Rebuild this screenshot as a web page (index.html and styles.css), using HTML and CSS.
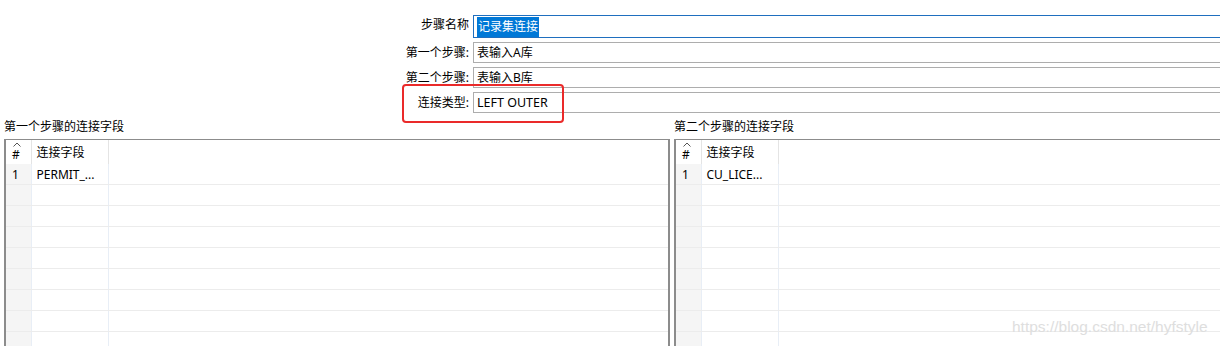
FILE: index.html
```html
<!DOCTYPE html>
<html lang="zh">
<head>
<meta charset="UTF-8">
<title>记录集连接</title>
<link rel="stylesheet" href="styles.css">
</head>
<body>

<div class="dialog">
  <div class="settings">
    <label class="field-label" for="step_name">步骤名称</label>
    <div class="field field-active" id="step_name"><span class="selected">记录集连接</span></div>

    <label class="field-label">第一个步骤:</label>
    <div class="field">表输入A库</div>

    <label class="field-label">第二个步骤:</label>
    <div class="field">表输入B库</div>

    <label class="field-label">连接类型:</label>
    <div class="field">LEFT OUTER</div>
  </div>

  <!-- annotation around the join type -->
  <div class="highlight-box"></div>

  <div class="panels">
    <div class="panel panel-left">
      <div class="panel-title">第一个步骤的连接字段</div>
      <div class="grid-box">
        <table class="grid">
          <colgroup><col class="c-num"><col class="c-name"><col></colgroup>
          <thead>
            <tr>
              <th class="num"><svg class="sort" width="8" height="5" viewBox="0 0 8 5"><path d="M0.5 4.5 L4 1 L7.5 4.5" fill="none" stroke="#555" stroke-width="1"/></svg>#</th>
              <th>连接字段</th><th></th>
            </tr>
          </thead>
          <tbody>
            <tr><td class="num">1</td><td>PERMIT_...</td><td></td></tr>
            <tr><td class="num"></td><td></td><td></td></tr>
            <tr><td class="num"></td><td></td><td></td></tr>
            <tr><td class="num"></td><td></td><td></td></tr>
            <tr><td class="num"></td><td></td><td></td></tr>
            <tr><td class="num"></td><td></td><td></td></tr>
            <tr><td class="num"></td><td></td><td></td></tr>
            <tr><td class="num"></td><td></td><td></td></tr>
            <tr><td class="num"></td><td></td><td></td></tr>
          </tbody>
        </table>
      </div>
    </div>

    <div class="panel panel-right">
      <div class="panel-title">第二个步骤的连接字段</div>
      <div class="grid-box">
        <table class="grid">
          <colgroup><col class="c-num"><col class="c-name"><col></colgroup>
          <thead>
            <tr>
              <th class="num"><svg class="sort" width="8" height="5" viewBox="0 0 8 5"><path d="M0.5 4.5 L4 1 L7.5 4.5" fill="none" stroke="#555" stroke-width="1"/></svg>#</th>
              <th>连接字段</th><th></th>
            </tr>
          </thead>
          <tbody>
            <tr><td class="num">1</td><td>CU_LICE...</td><td></td></tr>
            <tr><td class="num"></td><td></td><td></td></tr>
            <tr><td class="num"></td><td></td><td></td></tr>
            <tr><td class="num"></td><td></td><td></td></tr>
            <tr><td class="num"></td><td></td><td></td></tr>
            <tr><td class="num"></td><td></td><td></td></tr>
            <tr><td class="num"></td><td></td><td></td></tr>
            <tr><td class="num"></td><td></td><td></td></tr>
            <tr><td class="num"></td><td></td><td></td></tr>
          </tbody>
        </table>
      </div>
    </div>
  </div>

  <div class="watermark">https://blog.csdn.net/hyfstyle</div>
</div>

</body>
</html>
```

FILE: styles.css
```css
html, body {
  margin: 0;
  padding: 0;
  background-color: #fff;
  overflow: hidden;
}

body {
  font-family: "Noto Sans", "Noto Sans CJK SC", sans-serif;
  font-size: 12px;
  color: #000;
}

.dialog {
  position: relative;
  width: 1220px;
  height: 346px;
}

/* top form */
.settings {
  display: grid;
  grid-template-columns: 469px 760px;
  column-gap: 4px;
  row-gap: 4px;
  padding-top: 15px;
}

.field-label {
  text-align: right;
  line-height: 16px;
  align-self: center;
  white-space: nowrap;
}

.settings .field-label:first-child {
  align-self: start;
  padding-top: 2px;
}

.field {
  height: 19px;
  line-height: 19px;
  border: 1px solid #adadad;
  padding-left: 3px;
  white-space: nowrap;
}

.field:last-child {
  font-size: 12.5px;
}

.field-active {
  height: 21px;
  line-height: 21px;
  border-color: #1f6fbf;
}

.selected {
  background-color: #0078d7;
  color: #fff;
  padding: 1px 1px 2px;
}

.highlight-box {
  position: absolute;
  left: 402px;
  top: 84px;
  width: 158px;
  height: 35px;
  border: 2px solid #ea2a2a;
  border-radius: 4px;
}

/* field grids */
.panels {
  display: flex;
  gap: 4px;
  padding-left: 4px;
  margin-top: 6px;
}

.panel {
  flex-shrink: 0;
}

.panel-left {
  width: 666px;
}

.panel-right {
  width: 560px;
}

.panel-title {
  height: 20px;
  line-height: 16px;
  white-space: nowrap;
}

.grid-box {
  border: 1px solid #8c8c8c;
  border-left-width: 2px;
  border-right-width: 2px;
  height: 220px;
  overflow: hidden;
}

.panel-right .grid-box {
  border-right: none;
}

.grid {
  width: 100%;
  border-collapse: collapse;
  table-layout: fixed;
}

.c-num {
  width: 25px;
}

.c-name {
  width: 77px;
}

.grid th {
  height: 24px;
  padding: 0 0 0 5px;
  text-align: left;
  font-weight: normal;
  border-right: 1px solid #e4e4e4;
  position: relative;
}

.grid th.num {
  padding-left: 6px;
  padding-top: 6px;
  height: 18px;
  line-height: 16px;
}

.sort {
  position: absolute;
  left: 7px;
  top: 2px;
  display: block;
}

.grid td {
  height: 20px;
  padding: 0 0 0 5px;
  border-bottom: 1px solid #ececec;
  border-right: 1px solid #e8eef6;
  white-space: nowrap;
  overflow: hidden;
}

.grid td.num {
  background-color: #f5f5f5;
  padding-left: 6px;
}

.grid th:last-child,
.grid td:last-child {
  border-right: none;
}

.watermark {
  position: absolute;
  left: 1012px;
  top: 318px;
  font-family: "Liberation Sans", Arial, sans-serif;
  font-size: 15.5px;
  color: #dedede;
}
```
